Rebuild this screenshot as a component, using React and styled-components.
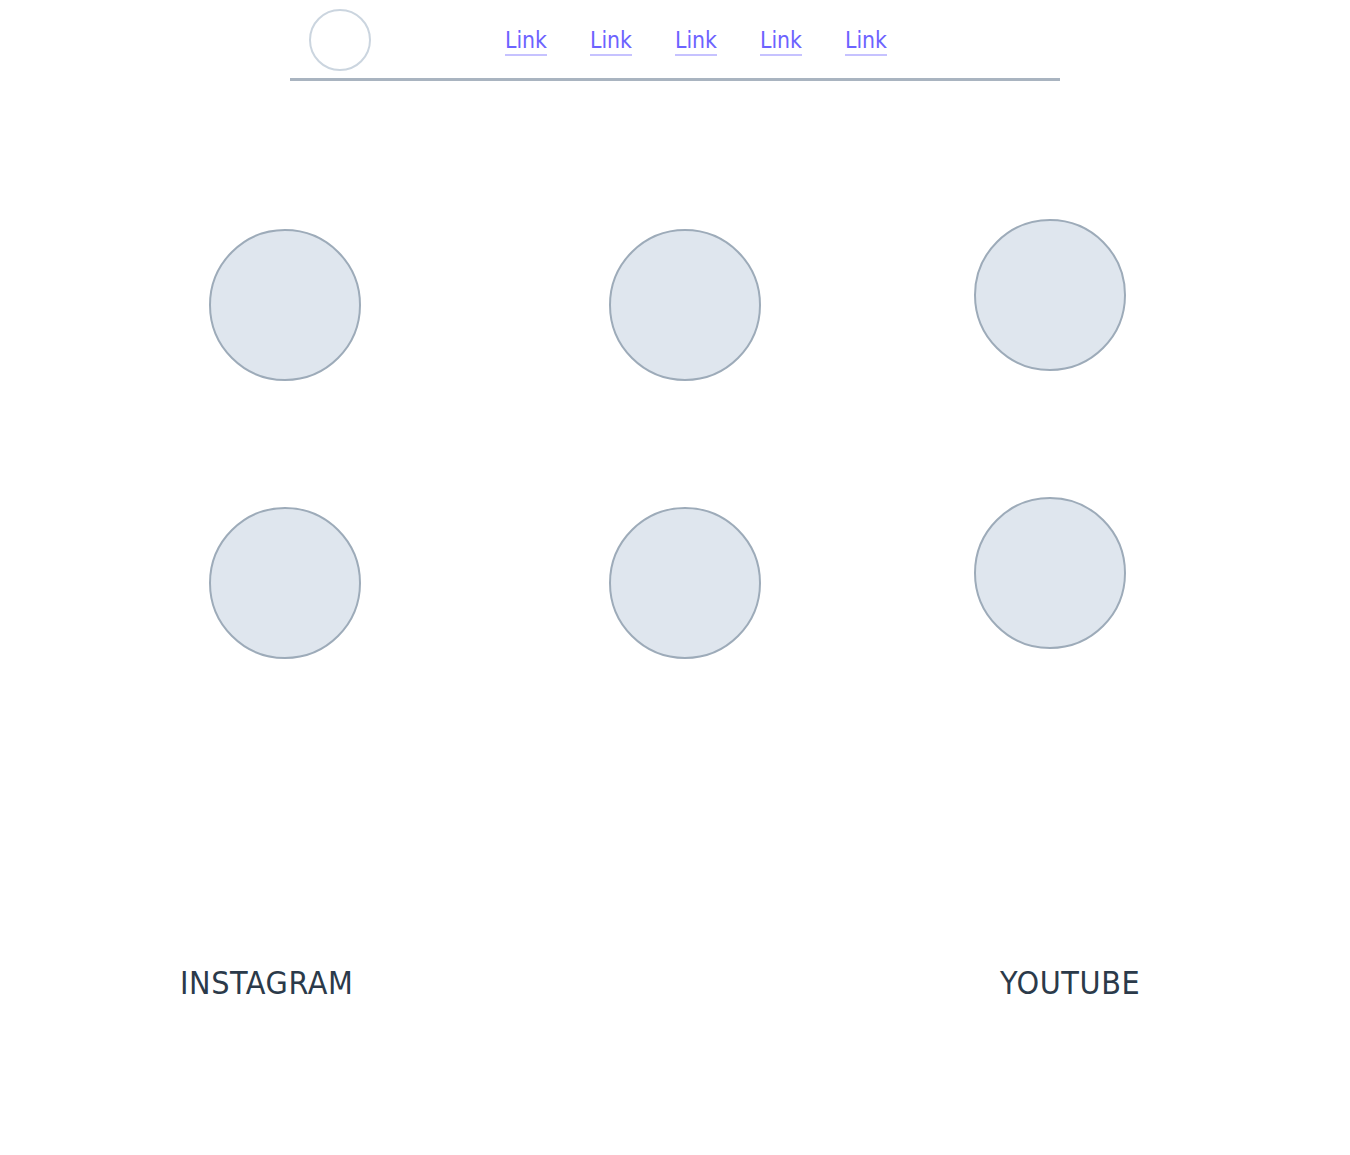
import React from 'react'
import styled, { createGlobalStyle } from 'styled-components'

const GlobalStyle = createGlobalStyle`
  html, body {
    margin: 0;
    padding: 0;
    background: #ffffff;
  }
  body {
    font-family: "DejaVu Sans Condensed", "DejaVu Sans", sans-serif;
  }
`

const Page = styled.div`
  width: 1350px;
  min-height: 1155px;
  background: #ffffff;
`

const Header = styled.header`
  width: 770px;
  height: 78px;
  margin: 0 auto;
  border-bottom: 3px solid #a9b4c0;
  display: flex;
  align-items: flex-start;
`

const Logo = styled.div`
  width: 58px;
  height: 58px;
  margin: 9px 0 0 19px;
  border: 2px solid #cbd5df;
  border-radius: 50%;
`

const Nav = styled.nav`
  display: flex;
  gap: 43px;
  margin: 27px 0 0 134px;
`

const NavLink = styled.a`
  font-size: 22.8px;
  line-height: 27px;
  color: #6c63ff;
  text-decoration: none;
  border-bottom: 2px solid #c6c2ff;
  cursor: pointer;
`

const Grid = styled.div`
  display: grid;
  grid-template-columns: 152px 152px 152px;
  grid-template-rows: 152px 152px;
  column-gap: 248px;
  row-gap: 126px;
  padding: 148px 0 0 209px;
`

const Circle = styled.div`
  box-sizing: border-box;
  width: 152px;
  height: 152px;
  border: 2px solid #9dabb9;
  border-radius: 50%;
  background: #dfe6ee;
  margin-left: ${({ $shift }) => $shift || 0}px;
  margin-top: ${({ $lift }) => ($lift ? -$lift : 0)}px;
`

const Footer = styled.footer`
  display: flex;
  padding: 306px 0 0 180px;
`

const Social = styled.a`
  font-size: 32px;
  line-height: 36px;
  color: #2b3a4a;
  text-decoration: none;
  letter-spacing: 0.6px;
  width: ${({ $w }) => $w}px;
`

const circles = [
  { shift: 0, lift: 0 },
  { shift: 0, lift: 0 },
  { shift: -35, lift: 10 },
  { shift: 0, lift: 0 },
  { shift: 0, lift: 0 },
  { shift: -35, lift: 10 }
]

const App = () => (
  <Page>
    <GlobalStyle />
    <Header>
      <Logo />
      <Nav>
        {[0, 1, 2, 3, 4].map((i) => (
          <NavLink key={i}>Link</NavLink>
        ))}
      </Nav>
    </Header>
    <Grid>
      {circles.map((c, i) => (
        <Circle key={i} $shift={c.shift} $lift={c.lift} />
      ))}
    </Grid>
    <Footer>
      <Social $w={820}>INSTAGRAM</Social>
      <Social>YOUTUBE</Social>
    </Footer>
  </Page>
)

export default App
